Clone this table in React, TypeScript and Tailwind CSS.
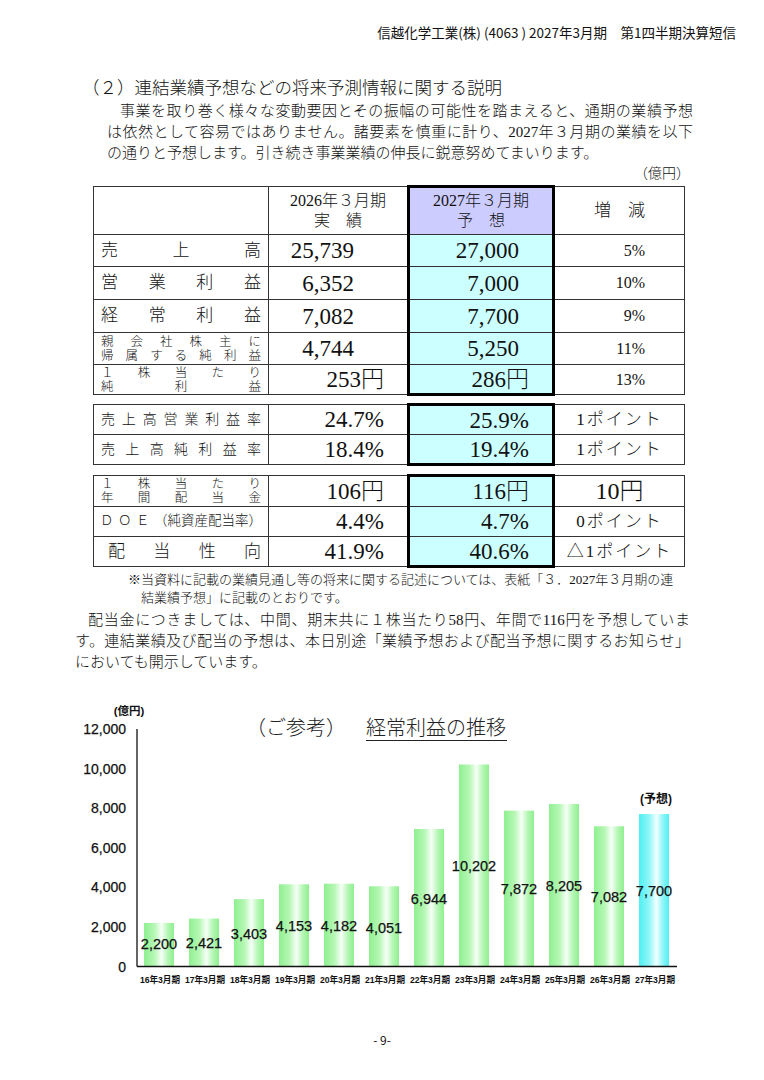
import React from "react";

const MIN = "font-['Liberation_Serif','Noto_Sans_CJK_JP',serif]";
const GOTHIC = "font-['Noto_Sans_CJK_JP','Liberation_Sans',sans-serif]";

function Spread({ text, className = "" }: { text: string; className?: string }) {
  return (
    <div className={`flex justify-between ${className}`}>
      {Array.from(text).map((ch, i) => (
        <span key={i}>{ch}</span>
      ))}
    </div>
  );
}

function Label2({ top, bottom }: { top: string; bottom: string }) {
  return (
    <div className="px-[7px] text-[12.5px] leading-[14px]">
      <Spread text={top} />
      <Spread text={bottom} />
    </div>
  );
}

type Kind = "pct" | "pt" | "yen";

type RowData = {
  label: React.ReactNode;
  a: string;
  b: string;
  c: string;
  h: string;
  unit?: boolean;
  kind: Kind;
};

const td = "border border-[#333] p-0 align-middle";
const hi = "border-x-[3px] border-x-black bg-[#ccffff]";

function ForecastBlock({ rows, header = false }: { rows: RowData[]; header?: boolean }) {
  return (
    <table className="w-[591px] table-fixed border-collapse">
      <colgroup>
        <col className="w-[175px]" />
        <col className="w-[140px]" />
        <col className="w-[145px]" />
        <col className="w-[131px]" />
      </colgroup>
      <tbody>
        {header && (
          <tr className="h-[48px]">
            <td className={td}></td>
            <td className={`${td} text-center text-[16px] leading-[20px]`}>
              <div>2026年３月期</div>
              <div>実　績</div>
            </td>
            <td className={`${td} border-x-[3px] border-t-[3px] border-x-black border-t-black bg-[#ccccff] text-center text-[16px] leading-[20px]`}>
              <div>2027年３月期</div>
              <div>予　想</div>
            </td>
            <td className={`${td} text-center text-[17px]`}>増　減</td>
          </tr>
        )}
        {rows.map((r, i) => {
          const first = i === 0 && !header;
          const last = i === rows.length - 1;
          return (
            <tr key={i} className={r.h}>
              <td className={td}>{r.label}</td>
              <td className={`${td} text-right text-[23px] leading-none`}>
                <span className={r.unit ? "pr-[23px]" : "pr-[53px]"}>{r.a}</span>
              </td>
              <td
                className={`${td} ${hi} ${first ? "border-t-[3px] border-t-black" : ""} ${
                  last ? "border-b-[3px] border-b-black" : ""
                } text-right text-[23px] leading-none`}
              >
                <span className={r.unit ? "pr-[23px]" : "pr-[33px]"}>{r.b}</span>
              </td>
              {r.kind === "pct" && (
                <td className={`${td} text-right text-[16px]`}>
                  <span className="pr-[39px]">{r.c}</span>
                </td>
              )}
              {r.kind === "pt" && (
                <td className={`${td} text-center text-[17px] tracking-[2px]`}>{r.c}</td>
              )}
              {r.kind === "yen" && <td className={`${td} text-center text-[24px] leading-none`}>{r.c}</td>}
            </tr>
          );
        })}
      </tbody>
    </table>
  );
}

const block1: RowData[] = [
  { label: <Spread text="売上高" className="px-[7px] text-[17px]" />, a: "25,739", b: "27,000", c: "5%", h: "h-[32px]", kind: "pct" },
  { label: <Spread text="営業利益" className="px-[7px] text-[17px]" />, a: "6,352", b: "7,000", c: "10%", h: "h-[33px]", kind: "pct" },
  { label: <Spread text="経常利益" className="px-[7px] text-[17px]" />, a: "7,082", b: "7,700", c: "9%", h: "h-[33px]", kind: "pct" },
  { label: <Label2 top="親会社株主に" bottom="帰属する純利益" />, a: "4,744", b: "5,250", c: "11%", h: "h-[32px]", kind: "pct" },
  { label: <Label2 top="１株当たり" bottom="純利益" />, a: "253円", b: "286円", c: "13%", h: "h-[30px]", unit: true, kind: "pct" },
];

const block2: RowData[] = [
  { label: <Spread text="売上高営業利益率" className="px-[7px] text-[14px]" />, a: "24.7%", b: "25.9%", c: "1ポイント", h: "h-[30px]", unit: true, kind: "pt" },
  { label: <Spread text="売上高純利益率" className="px-[7px] text-[14px]" />, a: "18.4%", b: "19.4%", c: "1ポイント", h: "h-[30px]", unit: true, kind: "pt" },
];

const block3: RowData[] = [
  { label: <Label2 top="１株当たり" bottom="年間配当金" />, a: "106円", b: "116円", c: "10円", h: "h-[31px]", unit: true, kind: "yen" },
  {
    label: (
      <div className="flex justify-between px-[6px] text-[13.5px]">
        <span>Ｄ</span>
        <span>Ｏ</span>
        <span>Ｅ</span>
        <span>（純資産配当率）</span>
      </div>
    ),
    a: "4.4%",
    b: "4.7%",
    c: "0ポイント",
    h: "h-[30px]",
    unit: true,
    kind: "pt",
  },
  { label: <Spread text="配当性向" className="pl-[14px] pr-[7px] text-[17px]" />, a: "41.9%", b: "40.6%", c: "△1ポイント", h: "h-[30px]", unit: true, kind: "pt" },
];

const bars = [
  { year: "16", v: 2200, ly: 942 },
  { year: "17", v: 2421, ly: 941 },
  { year: "18", v: 3403, ly: 932 },
  { year: "19", v: 4153, ly: 924 },
  { year: "20", v: 4182, ly: 924 },
  { year: "21", v: 4051, ly: 926 },
  { year: "22", v: 6944, ly: 897 },
  { year: "23", v: 10202, ly: 864 },
  { year: "24", v: 7872, ly: 887 },
  { year: "25", v: 8205, ly: 884 },
  { year: "26", v: 7082, ly: 895 },
  { year: "27", v: 7700, ly: 889 },
];

const OFF = 695;
const ZERO = 964.5 - OFF;
const K = 0.0198;

function ProfitChart() {
  const sans = "'Liberation Sans', 'Noto Sans CJK JP', sans-serif";
  return (
    <svg width={764} height={300} className="mt-[24px] block">
      <defs>
        <linearGradient id="g" x1="0" x2="1" y1="0" y2="0">
          <stop offset="0" stopColor="#8ff08f" />
          <stop offset="0.35" stopColor="#b6f7b6" />
          <stop offset="0.58" stopColor="#f6fff6" />
          <stop offset="0.8" stopColor="#b3f6b3" />
          <stop offset="1" stopColor="#8ff08f" />
        </linearGradient>
        <linearGradient id="c" x1="0" x2="1" y1="0" y2="0">
          <stop offset="0" stopColor="#4ef0f3" />
          <stop offset="0.35" stopColor="#93f6f8" />
          <stop offset="0.58" stopColor="#f2ffff" />
          <stop offset="0.8" stopColor="#8ef5f7" />
          <stop offset="1" stopColor="#4ef0f3" />
        </linearGradient>
      </defs>

      <text x={129} y={18} textAnchor="middle" fontSize={11.5} fontWeight={700} fontFamily={sans} fill="#111">
        (億円)
      </text>

      {[0, 2000, 4000, 6000, 8000, 10000, 12000].map((v) => (
        <text
          key={v}
          x={126}
          y={ZERO - v * K + 5}
          textAnchor="end"
          fontSize={14}
          fontFamily={sans}
          fill="#111"
          stroke="#111"
          strokeWidth={0.25}
        >
          {v.toLocaleString("en-US")}
        </text>
      ))}

      <text x={246} y={38} fontSize={20} fontFamily="'Noto Sans CJK JP', sans-serif" fontWeight={300} fill="#222">
        （ご参考）
      </text>
      <text x={366} y={38} fontSize={20} fontFamily="'Noto Sans CJK JP', sans-serif" fontWeight={300} fill="#222">
        経常利益の推移
      </text>
      <line x1={366} x2={507} y1={43.5} y2={43.5} stroke="#222" strokeWidth={1} />

      {bars.map((b, i) => {
        const cx = 159 + 45 * i;
        const h = b.v * K;
        return (
          <g key={b.year}>
            <rect x={cx - 15} y={ZERO - h} width={30} height={h} fill={i === 11 ? "url(#c)" : "url(#g)"} />
            <text
              x={cx}
              y={b.ly - OFF + 5}
              textAnchor="middle"
              fontSize={14.5}
              fontFamily={sans}
              fill="#111"
              stroke="#111"
              strokeWidth={0.25}
            >
              {b.v.toLocaleString("en-US")}
            </text>
            <text x={cx + 1} y={ZERO + 16} textAnchor="middle" fontSize={8.6} fontWeight={700} fontFamily={sans} fill="#111">
              {b.year}年3月期
            </text>
          </g>
        );
      })}

      <text x={656} y={105.5} textAnchor="middle" fontSize={12} fontWeight={700} fontFamily={sans} fill="#111">
        (予想)
      </text>

      <line x1={137} x2={137} y1={32} y2={ZERO} stroke="#111" strokeWidth={1.3} />
      <line x1={137} x2={677} y1={ZERO} y2={ZERO} stroke="#111" strokeWidth={1.3} />
    </svg>
  );
}

export default function App() {
  const justify = "whitespace-nowrap [text-align-last:justify]";
  return (
    <div className={`w-[764px] h-[1080px] bg-white text-[#111] ${MIN} font-light`}>
      <div className={`flex justify-end pr-[28px] pt-[23px] text-[13.5px] leading-[18px] font-normal ${GOTHIC}`}>
        信越化学工業(株) (4063 ) 2027年3月期　第1四半期決算短信
      </div>

      <h2 className="ml-[82px] mt-[36px] text-[17.5px] leading-[22px] font-light">（２）連結業績予想などの将来予測情報に関する説明</h2>

      <div className="ml-[107px] mt-[2px] w-[586px] text-[15px] leading-[21px]">
        <div className={`pl-[13px] ${justify}`}>事業を取り巻く様々な変動要因とその振幅の可能性を踏まえると、通期の業績予想</div>
        <div className={justify}>は依然として容易ではありません。諸要素を慎重に計り、2027年３月期の業績を以下</div>
        <div className="whitespace-nowrap">の通りと予想します。引き続き事業業績の伸長に鋭意努めてまいります。</div>
      </div>

      <div className="pr-[74px] text-right text-[14px] leading-[20px]">（億円）</div>

      <div className="ml-[93px] mt-[1px] flex flex-col">
        <ForecastBlock rows={block1} header />
        <div className="mt-[7px]">
          <ForecastBlock rows={block2} />
        </div>
        <div className="mt-[8px]">
          <ForecastBlock rows={block3} />
        </div>
      </div>

      <div className="ml-[128px] mt-[3px] text-[13px] leading-[18px] whitespace-nowrap">
        <div>※当資料に記載の業績見通し等の将来に関する記述については、表紙「３．2027年３月期の連</div>
        <div className="pl-[13px]">結業績予想」に記載のとおりです。</div>
      </div>

      <div className="ml-[75px] mt-[2.5px] w-[615px] text-[15px] leading-[21px]">
        <div className={`pl-[13px] ${justify}`}>配当金につきましては、中間、期末共に１株当たり58円、年間で116円を予想していま</div>
        <div className={justify}>す。連結業績及び配当の予想は、本日別途「業績予想および配当予想に関するお知らせ」</div>
        <div className="whitespace-nowrap">においても開示しています。</div>
      </div>

      <ProfitChart />

      <div className={`mt-[35px] text-center text-[12px] leading-[16px] font-normal ${GOTHIC}`}>- 9-</div>
    </div>
  );
}
